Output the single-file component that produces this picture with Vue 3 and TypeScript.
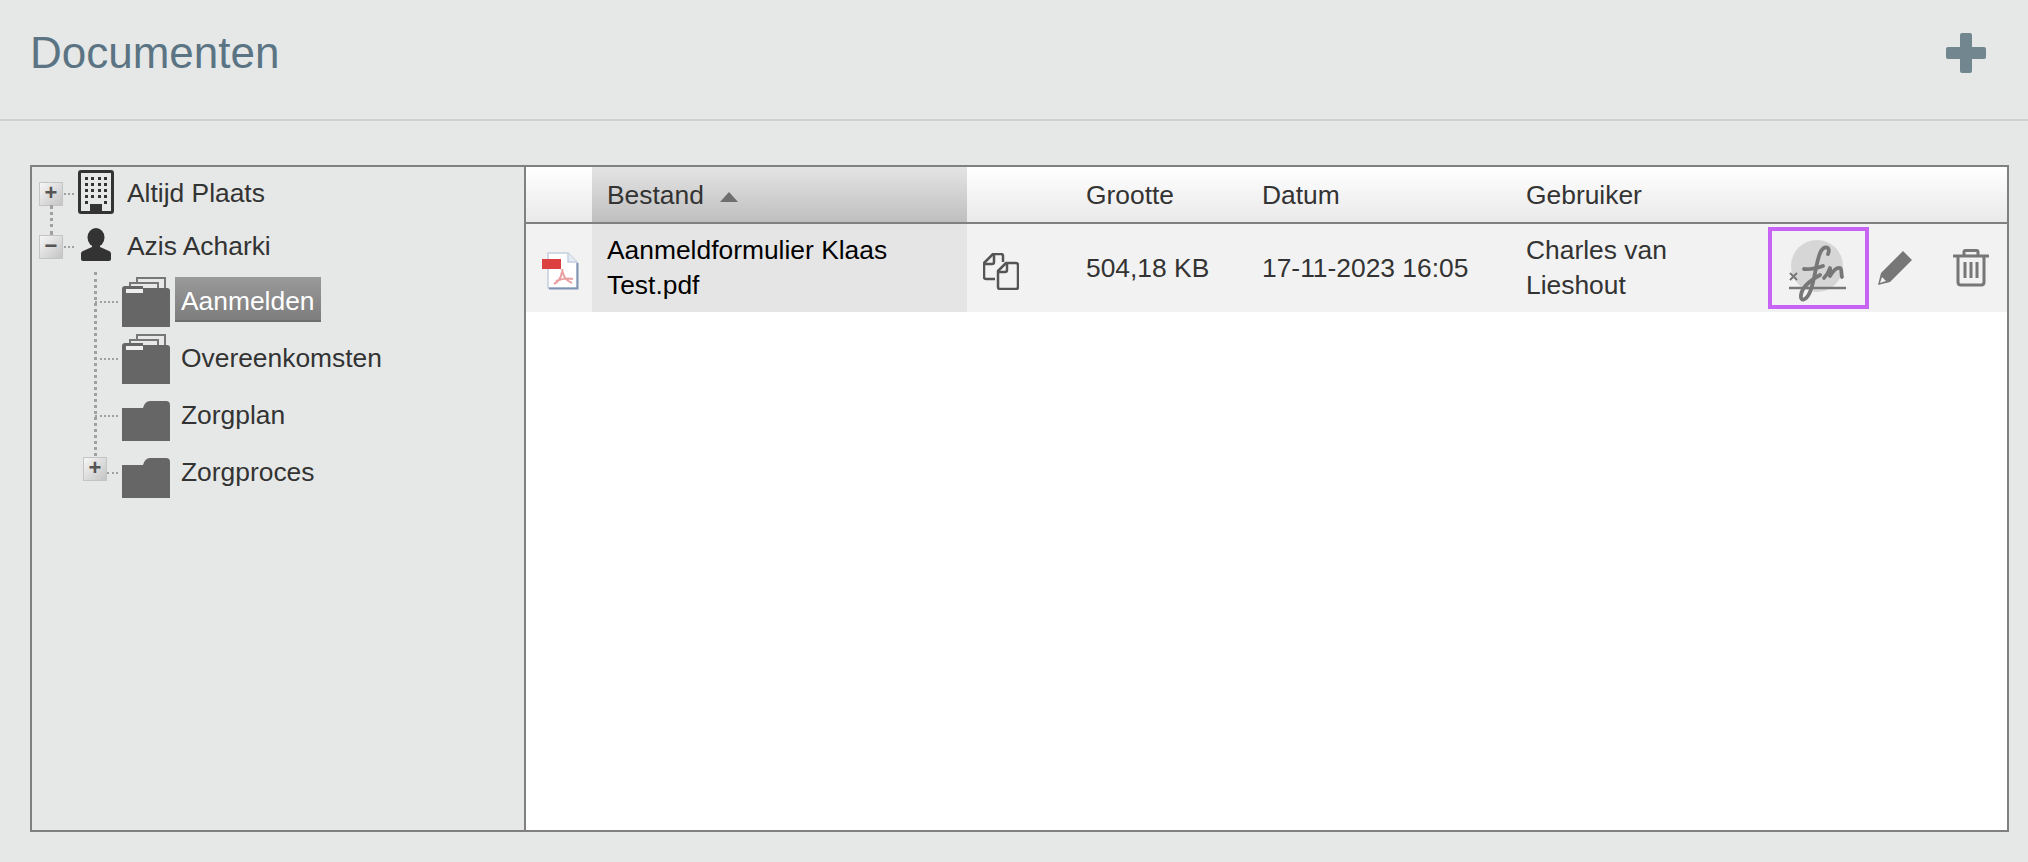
<script setup lang="ts">
type TreeItem = {
  id: string;
  label: string;
  tabs?: boolean;
  selected?: boolean;
  toggle?: boolean;
};

const folders: TreeItem[] = [
  { id: "a", label: "Aanmelden", tabs: true, selected: true },
  { id: "o", label: "Overeenkomsten", tabs: true },
  { id: "zp", label: "Zorgplan" },
  { id: "zc", label: "Zorgproces", toggle: true },
];

// vensters van het gebouw-icoon
const windows: number[][] = [];
for (let y = 7; y <= 31; y += 6) {
  const xs = y === 31 ? [7, 26] : [7, 13, 20, 26];
  xs.forEach((x) => windows.push([x, y]));
}
</script>

<template>
  <div class="page">
    <header class="top">
      <h1>Documenten</h1>
      <svg class="add" width="42" height="42" viewBox="0 0 42 42">
        <path d="M15 3a2 2 0 0 1 2-2h8a2 2 0 0 1 2 2v12h12a2 2 0 0 1 2 2v8a2 2 0 0 1-2 2H27v12a2 2 0 0 1-2 2h-8a2 2 0 0 1-2-2V27H3a2 2 0 0 1-2-2v-8a2 2 0 0 1 2-2h12z" fill="#72868f" />
      </svg>
    </header>

    <section class="panel">
      <aside class="tree">
        <div class="node">
          <span class="toggle">+</span>
          <span class="dots short"></span>
          <svg class="building" width="36" height="44" viewBox="0 0 36 44">
            <rect x="1.5" y="1.5" width="33" height="41" rx="1.5" fill="none" stroke="#333" stroke-width="3" />
            <rect v-for="w in windows" :key="w.join()" :x="w[0]" :y="w[1]" width="3" height="3" fill="#333" />
            <rect x="12" y="34" width="12" height="8" fill="#333" />
          </svg>
          <span class="label">Altijd Plaats</span>
        </div>
        <div class="node">
          <span class="toggle">−</span>
          <span class="dots short"></span>
          <svg class="person" width="30" height="33" viewBox="0 0 30 33">
            <ellipse cx="15" cy="9.500" rx="8.500" ry="9.500" fill="#333" />
            <path d="M11 16h8v3l9 4c1.500.7 2 1.500 2 3v5c0 1.200-.8 2-2 2H2c-1.200 0-2-.8-2-2v-5c0-1.500.5-2.300 2-3l9-4z" fill="#333" />
          </svg>
          <span class="label">Azis Acharki</span>
        </div>
        <span class="link-top"></span>

        <ul class="folders">
          <span class="link-side"></span>
          <li v-for="f in folders" :key="f.id" class="folder-row">
            <span v-if="f.toggle" class="toggle sub">+</span>
            <span class="dots" :class="{ short: f.toggle }"></span>
            <svg class="folder" width="50" height="50" viewBox="0 0 50 50">
              <template v-if="f.tabs">
                <path d="M16 12V1h28v14" fill="#e8e8e8" stroke="#777" stroke-width="2" />
                <path d="M9 14V6h28v10" fill="#e8e8e8" stroke="#777" stroke-width="2" />
                <path d="M1 50V12q0-3 3-3h18v2h24q3 0 3 3v36z" fill="#666" />
                <rect x="5" y="12" width="17" height="4" fill="#eee" />
              </template>
              <path v-else d="M1 50V17h21q2-7 7-7h16q4 0 4 4v36z" fill="#666" />
            </svg>
            <span class="label" :class="{ selected: f.selected }">{{ f.label }}</span>
          </li>
        </ul>
      </aside>

      <div class="list">
        <div class="grid head">
          <div></div>
          <div class="sorted">Bestand <i class="caret"></i></div>
          <div></div>
          <div>Grootte</div>
          <div>Datum</div>
          <div>Gebruiker</div>
          <div></div>
        </div>
        <div class="grid row">
          <div class="center">
            <svg width="38" height="38" viewBox="0 0 38 38">
              <path d="M6 1h20l9 9v26H6z" fill="#fff" stroke="#c4cede" stroke-width="1.500" />
              <path d="M26 1v9h9" fill="#e6ebf2" stroke="#c4cede" stroke-width="1.500" />
              <path d="M35.500 11v25.500H7" fill="none" stroke="#7e93b3" stroke-width="2" />
              <rect x="0" y="7" width="19" height="10" fill="#dc4040" />
              <path d="M20 17c1 7 3 11 10 14M20 20c-1 6-4 10-8 12M14 29c5-2 12-3 17-2" fill="none" stroke="#e9a0a0" stroke-width="2" />
            </svg>
          </div>
          <div class="name">Aanmeldformulier Klaas Test.pdf</div>
          <div class="copy">
            <svg width="36" height="37" viewBox="0 0 36 37" fill="none" stroke="#555" stroke-width="2.500" stroke-linejoin="round">
              <path d="M12 26H3q-2 0-2-2V10l9-9h8q2 0 2 2v6" />
              <path d="M2 11h7q2 0 2-2V2" />
              <path d="M15 34V18l8-8h10q2 0 2 2v22q0 2-2 2H17q-2 0-2-2z" />
              <path d="M16 19h6q2 0 2-2v-6" />
            </svg>
          </div>
          <div>504,18 KB</div>
          <div>17-11-2023 16:05</div>
          <div class="user">Charles van Lieshout</div>
          <div class="actions">
            <span class="sign">
              <svg width="70" height="74" viewBox="0 0 70 74">
                <g transform="translate(0 3)">
                  <circle cx="33" cy="32" r="26" fill="#d6d6d6" />
                  <path d="M5 54h57" stroke="#777" stroke-width="2.500" />
                  <path d="M6 39l7 7M13 39l-7 7" stroke="#777" stroke-width="2" />
                  <path d="M44 20c3-7-3-9-7-3-5 9-6 30-11 41-4 9-10 10-9 3 1-8 10-15 19-20" fill="none" stroke="#777" stroke-width="3.800" stroke-linecap="round" />
                  <path d="M20 35c7 1 13-1 19-3" fill="none" stroke="#777" stroke-width="3.800" stroke-linecap="round" />
                  <path d="M40 44c3-3 5-7 6-10 1 3 0 6 0 8 3-5 7-9 10-8 2 1 1 5 2 9" fill="none" stroke="#777" stroke-width="3.800" stroke-linecap="round" stroke-linejoin="round" />
                </g>
              </svg>
            </span>
            <svg class="pencil" width="36" height="36" viewBox="0 0 36 36">
              <path d="M26 1l9 9-22 22L1 35l3-12z" fill="#777" />
              <path d="M5 27l4 4-6 2z" fill="#f2f2f2" />
            </svg>
            <svg class="trash" width="36" height="38" viewBox="0 0 36 38" fill="none" stroke="#777" stroke-width="3">
              <path d="M1 7h34M11 6V3q0-1.500 1.500-1.500h11Q25 1.500 25 3v3" stroke-linecap="round" />
              <path d="M5 8v25q0 3 3 3h20q3 0 3-3V8" />
              <path d="M12 13v16M18 13v16M24 13v16" />
            </svg>
          </div>
        </div>
      </div>
    </section>
  </div>
</template>

<style>
html,
body {
  background: #e6e8e7;
}
</style>

<style scoped>
.page {
  height: 862px;
  box-sizing: border-box;
  padding-bottom: 30px;
  display: flex;
  flex-direction: column;
  font-family: "Liberation Sans", Arial, sans-serif;
  font-size: 26.4px;
  color: #333;
}

.top {
  height: 119px;
  flex: none;
  display: flex;
  justify-content: space-between;
  align-items: flex-start;
  padding: 0 41px 0 30px;
  border-bottom: 2px solid #cfd1d0;
}

h1 {
  margin: 29px 0 0;
  font-size: 44px;
  line-height: 48px;
  font-weight: 400;
  color: #5b7484;
}

.add {
  margin: 32px 0 0;
}

.panel {
  flex: 1;
  margin: 44px 19px 0 30px;
  border: 2px solid #808080;
  display: flex;
  min-height: 0;
}

.tree {
  width: 492px;
  flex: none;
  position: relative;
  border-right: 2px solid #808080;
}

.node {
  display: flex;
  align-items: center;
  height: 53px;
  padding-left: 7px;
}

.toggle {
  width: 24px;
  height: 24px;
  flex: none;
  box-sizing: border-box;
  border: 1px solid #c4c4c4;
  background: linear-gradient(135deg, #f6f6f6, #c4c4c4);
  color: #555;
  font-size: 22px;
  font-weight: 700;
  line-height: 20px;
  text-align: center;
}

.dots {
  width: 23px;
  flex: none;
  border-top: 2px dotted #a0a0a0;
}

.dots.short {
  width: 10px;
  margin: 0 4px 0 1px;
}

.building {
  flex: none;
  margin-bottom: 4px;
}

.person {
  flex: none;
  margin: 0 0 4px 3px;
}

.node .label {
  margin: 0 0 0 13px;
}

.person + .label {
  margin-left: 16px;
}

.link-top {
  position: absolute;
  left: 18px;
  top: 38px;
  height: 30px;
  border-left: 3px dotted #a0a0a0;
}

.folders {
  position: relative;
  list-style: none;
  margin: 0;
  padding: 0 0 0 51px;
}

.link-side {
  position: absolute;
  left: 62px;
  top: -1px;
  height: 184px;
  border-left: 3px dotted #a0a0a0;
}

.folder-row {
  position: relative;
  display: flex;
  align-items: center;
  height: 57px;
  padding-left: 12px;
}

.toggle.sub {
  position: absolute;
  left: 0;
  top: 13px;
}

.folder-row .dots {
  margin-right: 3px;
}

.folder-row .dots.short {
  width: 11px;
  margin: 0 3px 0 12px;
}

.folder {
  flex: none;
}

.folder-row .label {
  margin: 0 0 4px 4px;
  padding: 0 6px;
  height: 45px;
  line-height: 48px;
}

.label.selected {
  box-sizing: border-box;
  background: linear-gradient(#9a9a9a, #7d7d7d);
  border-bottom: 2px solid #6e6e6e;
  color: #fff;
}

.list {
  flex: 1;
  min-width: 0;
  background: #fff;
}

.grid {
  display: grid;
  grid-template-columns: 66px 375px 104px 176px 264px 253px 1fr;
}

.grid > div {
  display: flex;
  align-items: center;
  padding-left: 15px;
  min-width: 0;
}

.head {
  height: 55px;
  border-bottom: 2px solid #808080;
  background: linear-gradient(#fff, #e9e9e9);
}

.head > div {
  padding-top: 2px;
}

.head > .sorted {
  background: linear-gradient(#e4e4e4, #bfbfbf);
  gap: 16px;
}

.caret {
  width: 0;
  height: 0;
  margin-top: 2px;
  border: 9px solid transparent;
  border-top: 0;
  border-bottom: 10px solid #6e6e6e;
}

.row {
  height: 88px;
  background: #f2f2f2;
  line-height: 35px;
}

.grid > .center {
  padding-left: 16px;
}

.center svg {
  margin-top: 6px;
}

.grid > .name {
  background: #e5e5e5;
  color: #000;
}

.grid > .copy {
  padding-left: 16px;
}

.copy svg {
  margin-top: 7px;
}

.grid > .user {
  padding-right: 60px;
}

.grid > .actions {
  padding-left: 0;
}

.sign {
  box-sizing: border-box;
  width: 101px;
  height: 82px;
  flex: none;
  margin-left: 4px;
  border: 4px solid #c864f5;
  display: flex;
  align-items: center;
  justify-content: center;
}

.pencil {
  margin-left: 8px;
}

.trash {
  margin-left: 40px;
}
</style>
